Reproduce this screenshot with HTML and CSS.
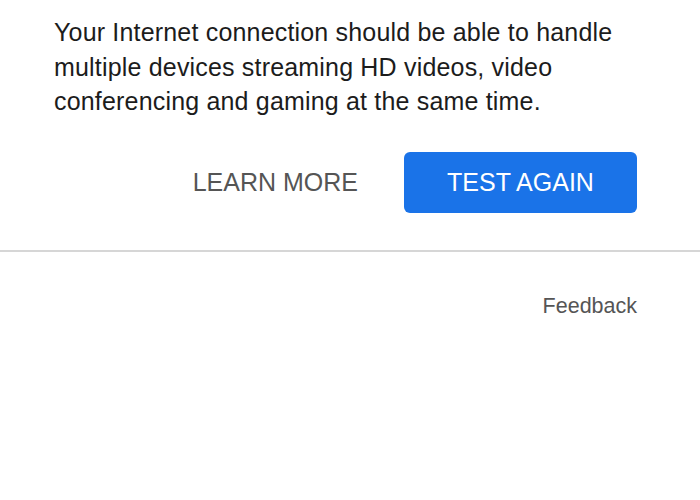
FILE: index.html
```html
<!DOCTYPE html>
<html lang="en">
<head>
  <meta charset="UTF-8" />
  <title>Speed Test Result</title>
  <link rel="stylesheet" href="styles.css">
</head>
<body>
  <div class="result">
    <p class="summary">Your Internet connection should be able to handle multiple devices streaming HD videos, video conferencing and gaming at the same time.</p>
    <div class="actions">
      <a class="btn btn-link" href="#">LEARN MORE</a>
      <a class="btn btn-primary" href="#">TEST AGAIN</a>
    </div>
  </div>
  <div class="footer">
    <a class="feedback" href="#">Feedback</a>
  </div>
</body>
</html>
```

FILE: styles.css
```css
body { margin: 0; background: #fff; font-family: "Liberation Sans", Arial, sans-serif; color: #222; }
.result { padding: 15px 63px 37px 54px; border-bottom: 2px solid #d6d6d6; }
.summary { margin: 0; font-size: 25px; line-height: 34.5px; letter-spacing: 0.18px; color: #1c1c1c; }
.actions { display: flex; justify-content: flex-end; align-items: center; gap: 46px; margin-top: 33.5px; }
.btn { font-size: 25px; text-decoration: none; text-align: center; }
.btn-link { color: #555; }
.btn-primary { background: #1a73e8; color: #fff; width: 233px; height: 61px; line-height: 61px; border-radius: 6px; }
.footer { display: flex; justify-content: flex-end; padding: 42px 63px 0 0; }
.feedback { font-size: 21.5px; color: #555; text-decoration: none; }
```
